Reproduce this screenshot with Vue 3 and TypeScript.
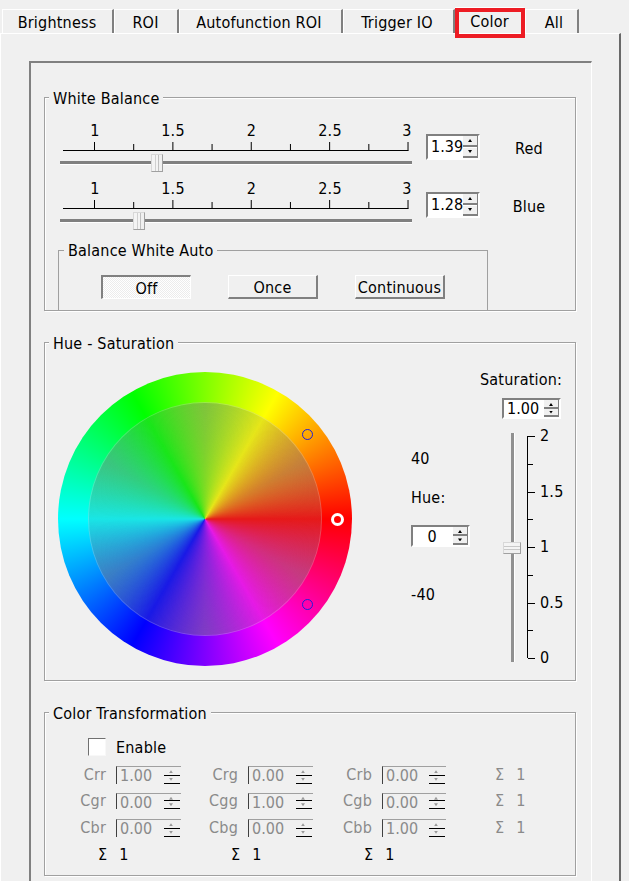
<script setup lang="ts">
const tabs = ['Brightness', 'ROI', 'Autofunction ROI', 'Trigger IO', 'Color', 'All']
const hMinor = [0, 1, 2, 3, 4, 5, 6, 7, 8]
const sliders = [
  { value: '1.39', name: 'Red', thumb: 91 },
  { value: '1.28', name: 'Blue', thumb: 73 },
]
const matrix = [
  [['Crr', '1.00'], ['Crg', '0.00'], ['Crb', '0.00']],
  [['Cgr', '0.00'], ['Cgg', '1.00'], ['Cgb', '0.00']],
  [['Cbr', '0.00'], ['Cbg', '0.00'], ['Cbb', '1.00']],
]
const vTicks = [0, 1, 2, 3, 4, 5, 6, 7, 8]
const vLabels: Record<number, string> = { 0: '2', 2: '1.5', 4: '1', 6: '0.5', 8: '0' }
</script>

<template>
  <div class="app">
    <div class="tabs">
      <div v-for="t in tabs" :key="t" class="tab" :class="[`tab-${t.split(' ')[0]}`, { active: t === 'Color' }]">{{ t }}</div>
      <div class="mark"></div>
    </div>
    <div class="pane">
      <div class="frame">
        <section class="group wb">
          <div class="legend">White Balance</div>
          <div v-for="s in sliders" :key="s.name" class="wb-row">
            <div class="hslider">
              <svg class="ruler" width="352" height="34" viewBox="0 0 352 34">
                <g class="labels">
                  <text x="35" y="19">1</text>
                  <text x="113" y="19">1.5</text>
                  <text x="191.500" y="19">2</text>
                  <text x="270" y="19">2.5</text>
                  <text x="347" y="19">3</text>
                </g>
                <line x1="3" y1="33.500" x2="348.500" y2="33.500" />
                <line v-for="n in hMinor" :key="n" :x1="34.500 + n * 39.190" :x2="34.500 + n * 39.190" :y1="n % 2 ? 27 : 25" y2="33.500" />
              </svg>
              <div class="hgroove"><div class="hthumb" :style="{ left: s.thumb + 'px' }"></div></div>
            </div>
            <div class="spin wb-spin">
              <span class="spin-val">{{ s.value }}</span>
              <span class="spin-btns"><i class="up"></i><i class="down"></i></span>
            </div>
            <div class="wb-name">{{ s.name }}</div>
          </div>
          <div class="bwa">
            <div class="legend small">Balance White Auto</div>
            <div class="btn-row">
              <div class="btn pressed">Off</div>
              <div class="btn">Once</div>
              <div class="btn">Continuous</div>
            </div>
          </div>
        </section>

        <section class="group hs">
          <div class="legend">Hue - Saturation</div>
          <div class="wheel">
            <div class="inner"><div class="inner-shade"></div></div>
            <span class="dot main"></span>
            <span class="dot blue top"></span>
            <span class="dot blue bottom"></span>
          </div>
          <div class="hue-col">
            <div class="h40">40</div>
            <div class="hue-label">Hue:</div>
            <div class="spin hue-spin">
              <span class="spin-val center">0</span>
              <span class="spin-btns"><i class="up"></i><i class="down"></i></span>
            </div>
            <div class="hm40">-40</div>
          </div>
          <div class="sat-col">
            <div class="sat-label">Saturation:</div>
            <div class="spin sat-spin">
              <span class="spin-val">1.00</span>
              <span class="spin-btns"><i class="up"></i><i class="down"></i></span>
            </div>
            <div class="vslider">
              <div class="vgroove"><div class="vthumb"></div></div>
              <div class="vruler">
                <div v-for="n in vTicks" :key="n" class="vtick" :class="{ major: n % 2 === 0 }">
                  <span v-if="vLabels[n]">{{ vLabels[n] }}</span>
                </div>
              </div>
            </div>
          </div>
        </section>

        <section class="group ct">
          <div class="legend">Color Transformation</div>
          <div class="enable"><span class="check"></span><span>Enable</span></div>
          <div v-for="(row, r) in matrix" :key="r" class="m-row" :class="`r${r}`">
            <template v-for="cell in row" :key="cell[0]">
              <span class="m-name">{{ cell[0] }}</span>
              <div class="mini">
                <span class="mini-val">{{ cell[1] }}</span>
                <span class="mini-btns"><i class="up"></i><i class="down"></i></span>
              </div>
            </template>
            <span class="sum dis"><b>Σ</b><em>1</em></span>
          </div>
          <div class="sum-row">
            <span class="sum"><b>Σ</b><em>1</em></span>
            <span class="sum"><b>Σ</b><em>1</em></span>
            <span class="sum"><b>Σ</b><em>1</em></span>
          </div>
        </section>
      </div>
    </div>
  </div>
</template>

<style>
html, body { margin: 0; background: #f0f0f0; overflow: hidden; }
</style>

<style scoped>
.app {
  width: 629px;
  height: 881px;
  overflow: hidden;
  background: #f0f0f0;
  color: #000;
  font-family: "DejaVu Sans Condensed", "DejaVu Sans", sans-serif;
  font-stretch: condensed;
  font-size: 16px;
  line-height: 20px;
  letter-spacing: .2px;
}
.tabs {
  position: relative;
  display: flex;
  height: 33px;
  padding: 9px 0 0 2px;
  box-sizing: border-box;
}
.tab {
  box-sizing: border-box;
  height: 24px;
  padding: 3px 1px 0 0;
  text-align: center;
  border-top: 1px solid #fff;
  border-left: 1px solid #fff;
  border-right: 2px solid #808080;
}
.tab-Brightness { width: 112px; }
.tab-ROI { width: 65px; }
.tab-Autofunction { width: 164px; padding-right: 3px; }
.tab-Trigger { width: 112px; padding-right: 3px; }
.tab-Color { width: 70px; border-right-color: transparent; margin-top: -2px; height: 26px; padding: 4px 0 0; }
.tab-All { width: 54px; padding: 3px 0 0 5px; }
.mark {
  position: absolute;
  left: 455px;
  top: 8px;
  width: 70px;
  height: 30px;
  box-sizing: border-box;
  border: 4px solid #ed1c24;
}
.pane {
  box-sizing: border-box;
  width: 621px;
  height: 860px;
  padding: 27px 28px 0 28px;
  border-top: 1px solid #fff;
  border-left: 1px solid #fff;
  border-right: 2px solid #696969;
}
.frame {
  box-sizing: border-box;
  width: 563px;
  height: 840px;
  padding: 34px 14px 0 13px;
  border-top: 2px solid #808080;
  border-left: 2px solid #808080;
  border-right: 1px solid #fff;
}
.group {
  position: relative;
  box-sizing: border-box;
  width: 532px;
  border: 1px solid #a0a0a0;
  box-shadow: 1px 1px 0 #fff, inset 1px 1px 0 #fff;
}
.legend {
  position: absolute;
  left: 4px;
  top: -9px;
  padding: 0 4px;
  background: #f0f0f0;
  line-height: 20px;
}
.wb { height: 214px; padding: 19px 0 0 15px; margin-bottom: 31px; }
.wb-row { display: flex; height: 58px; }
.hslider { width: 352px; }
.ruler { display: block; }
.ruler line { stroke: #000; stroke-width: 1; }
.ruler text { text-anchor: middle; font-size: 16px; fill: #000; }
.hgroove {
  position: relative;
  height: 3px;
  margin-top: 10px;
  background: #808080;
  box-shadow: 0 1px 0 #fff;
}
.hthumb {
  position: absolute;
  top: -7px;
  width: 12px;
  height: 18px;
  box-sizing: border-box;
  background: linear-gradient(90deg, #f4f4f4 0 3px, #d0d0d0 3px 4px, #f4f4f4 4px 6px, #c0c0c0 6px 7px, #f0f0f0 7px);
  border: 1px solid #d8d8d8;
  border-right-color: #a0a0a0;
  border-bottom-color: #a0a0a0;
}
.spin {
  display: flex;
  box-sizing: border-box;
  width: 59px;
  height: 26px;
  background: #fff;
  border-top: 2px solid #808080;
  border-left: 2px solid #808080;
  border-right: 2px solid #fff;
  border-bottom: 2px solid #fff;
}
.spin-val { flex: 1; padding-left: 3px; line-height: 22px; letter-spacing: 0; }
.spin-val.center { text-align: center; padding-left: 0; padding-right: 2px; }
.spin-btns {
  display: flex;
  flex-direction: column;
  justify-content: space-between;
  flex: none;
  width: 15px;
  border-right: 1px solid #808080;
  box-sizing: border-box;
}
.spin-btns i {
  position: relative;
  display: block;
  height: 11px;
  background: #f0f0f0;
  border-bottom: 2px solid #808080;
  box-sizing: border-box;
}
.spin-btns i.down { height: 10px; }
.spin-btns i::after, .mini-btns i::after {
  content: "";
  position: absolute;
  left: 5px;
  top: 3px;
  width: 4px;
  height: 3px;
  background: #000;
  clip-path: polygon(50% 0, 100% 100%, 0 100%);
}
.spin-btns i.down::after, .mini-btns i.down::after {
  top: 2px;
  clip-path: polygon(0 0, 100% 0, 50% 100%);
}
.wb-spin { margin: 17px 0 0 14px; }
.wb-name { width: 105px; padding-left: 3px; box-sizing: border-box; text-align: center; padding-top: 22px; }
.bwa {
  position: relative;
  box-sizing: border-box;
  width: 430px;
  height: 61px;
  margin: 17px 0 0 -2px;
  border-top: 1px solid #a0a0a0;
  border-left: 1px solid #a0a0a0;
  border-right: 1px solid #a0a0a0;
}
.legend.small { left: 5px; top: -10px; }
.btn-row { display: flex; padding: 24px 0 0 42px; }
.btn {
  box-sizing: border-box;
  width: 90px;
  height: 24px;
  margin-right: 37px;
  padding-top: 1px;
  text-align: center;
  line-height: 22px;
  background: #f0f0f0;
  border-top: 1px solid #fff;
  border-left: 1px solid #fff;
  border-right: 2px solid #808080;
  border-bottom: 2px solid #808080;
}
.btn.pressed {
  border-top: 2px solid #808080;
  border-left: 2px solid #808080;
  border-right: 1px solid #fff;
  border-bottom: 1px solid #fff;
  background: repeating-conic-gradient(#fff 0 25%, #ececec 0 50%) 0 0 / 2px 2px;
}
.hs {
  display: flex;
  height: 339px;
  margin-bottom: 31px;
}
.wheel {
  position: relative;
  flex: none;
  width: 294px;
  height: 294px;
  margin: 29px 0 0 13px;
  border-radius: 50%;
  background: conic-gradient(from 90deg, #f00, #f0f, #00f, #0ff, #0f0, #ff0, #f00);
}
.inner {
  position: absolute;
  left: 30px;
  top: 30px;
  width: 234px;
  height: 234px;
  box-sizing: border-box;
  border-radius: 50%;
  border: 1px solid rgba(255, 255, 255, .2);
  background: rgba(128, 128, 128, .2);
  overflow: hidden;
}
.inner-shade {
  width: 100%;
  height: 100%;
  background: repeating-conic-gradient(from 90deg, rgba(128, 128, 128, 0) 0deg, rgba(128, 128, 128, .34) 30deg, rgba(128, 128, 128, 0) 60deg);
  -webkit-mask-image: radial-gradient(circle closest-side, transparent 0, #000 100%);
  mask-image: radial-gradient(circle closest-side, transparent 0, #000 100%);
}
.dot { position: absolute; box-sizing: border-box; border-radius: 50%; }
.dot.main { left: 273px; top: 141px; width: 13px; height: 13px; border: 3px solid #fff; }
.dot.blue { left: 244px; width: 11px; height: 11px; border: 1px solid #1f1fd8; }
.dot.top { top: 57px; }
.dot.bottom { top: 227px; }
.hue-col { width: 59px; margin-left: 59px; }
.h40 { margin-top: 106px; }
.hue-label { margin-top: 19px; }
.hue-spin { margin-top: 17px; height: 22px; }
.hue-spin .spin-val { line-height: 19px; }
.hue-spin .spin-btns i { height: 10px; }
.hue-spin .spin-btns i.down { height: 9px; }
.hm40 { margin-top: 38px; }
.sat-col { width: 90px; margin-left: 10px; }
.sat-label { margin-top: 27px; }
.sat-spin { margin: 8px 0 0 22px; height: 21px; }
.sat-spin .spin-val { line-height: 18px; }
.sat-spin .spin-btns i { height: 9px; }
.vslider { display: flex; margin-top: 14px; }
.vgroove {
  position: relative;
  width: 3px;
  height: 229px;
  margin-left: 31px;
  background: #909090;
  box-shadow: 1px 0 0 #fff;
}
.vthumb {
  position: absolute;
  left: -8px;
  top: 109px;
  width: 18px;
  height: 12px;
  box-sizing: border-box;
  background: linear-gradient(180deg, #f4f4f4 0 3px, #c8c8c8 3px 4px, #f4f4f4 4px 6px, #c8c8c8 6px 7px, #f0f0f0 7px);
  border: 1px solid #d8d8d8;
  border-right-color: #a0a0a0;
  border-bottom-color: #a0a0a0;
}
.vruler {
  margin: 3px 0 0 13px;
  border-left: 1px solid #000;
  height: 222px;
}
.vtick { position: relative; width: 5px; height: 27.750px; }
.vtick:last-child { height: 1px; }
.vtick::before { content: ""; position: absolute; left: 0; top: 0; width: 5px; height: 1px; background: #000; }
.vtick.major::before { width: 7px; }
.vtick span { position: absolute; left: 12px; top: -10px; }
.ct { height: 164px; padding-top: 25px; }
.enable { display: flex; align-items: center; height: 18px; padding-left: 43px; gap: 10px; }
.enable span:last-child { padding-top: 1px; }
.check {
  box-sizing: border-box;
  width: 18px;
  height: 18px;
  background: #fff;
  border-top: 1px solid #707070;
  border-left: 1px solid #707070;
  border-right: 1px solid #f8f8f8;
  border-bottom: 1px solid #f8f8f8;
}
.m-row { display: flex; align-items: center; height: 26.500px; color: #8a8a8a; }
.m-row.r0 { margin-top: 6px; }
.m-row.r1 { margin: -1px 0 1px; }
.m-name { width: 62px; text-align: right; padding-right: 10px; box-sizing: border-box; }
.m-name:nth-of-type(1) { width: 71px; }
.m-name:nth-of-type(3) { width: 64px; }
.mini {
  display: flex;
  flex: none;
  box-sizing: border-box;
  width: 65px;
  height: 18px;
  overflow: hidden;
  margin-right: 5px;
  border-top: 1px solid #a0a0a0;
  border-left: 1px solid #404040;
}
.mini:nth-of-type(3) { width: 64px; margin-right: 6px; }
.r1 .mini { height: 16px; }
.mini-val { flex: 1; padding-left: 3px; line-height: 18px; letter-spacing: 0; }
.mini-btns {
  display: flex;
  flex-direction: column;
  width: 16px;
  margin-right: 1px;
}
.mini-btns i {
  position: relative;
  display: block;
  height: 8px;
  border-bottom: 1px solid #000;
}
.mini-btns i::after { background: #999; }
.sum { display: inline-flex; gap: 12px; }
.sum b { font-weight: 400; }
.sum em { font-style: normal; }
.sum.dis { margin-left: 43px; }
.sum-row { display: flex; padding: 3px 0 0 53px; }
.sum-row .sum { width: 133px; }
</style>
